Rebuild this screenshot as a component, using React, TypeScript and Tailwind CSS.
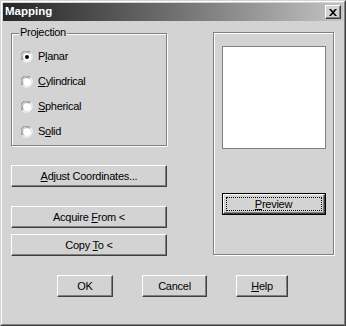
import React from "react";

const FONT = { fontFamily: '"Liberation Sans", Arial, sans-serif' };

function Btn({
  w,
  children,
  className = "",
}: {
  w: string;
  children: React.ReactNode;
  className?: string;
}) {
  return (
    <div
      className={`${w} h-[22px] flex items-center justify-center border border-t-white border-l-white border-r-[#404040] border-b-[#404040] shadow-[inset_-1px_-1px_0_#808080] text-[11px] tracking-[-0.25px] text-black bg-[#d3d3d3] ${className}`}
    >
      {children}
    </div>
  );
}

function Radio({ checked }: { checked?: boolean }) {
  return (
    <svg width="12" height="12" viewBox="0 0 12 12" className="shrink-0">
      <circle cx="6" cy="6" r="5.5" fill="#d3d3d3" />
      <path d="M1.5 9.5 A5.5 5.5 0 0 1 9.5 1.5" stroke="#808080" strokeWidth="1" fill="none" />
      <path d="M9.5 1.5 A5.5 5.5 0 0 1 1.5 9.5" stroke="#ffffff" strokeWidth="1" fill="none" />
      <path d="M2.5 8.5 A4.5 4.5 0 0 1 8.5 2.5" stroke="#404040" strokeWidth="1" fill="none" />
      <path d="M8.5 2.5 A4.5 4.5 0 0 1 2.5 8.5" stroke="#d3d3d3" strokeWidth="1" fill="none" />
      <circle cx="6" cy="6" r="4" fill="#ffffff" />
      {checked && <circle cx="6" cy="6" r="2" fill="#000000" />}
    </svg>
  );
}

function RadioRow({
  checked,
  pre,
  u,
  post,
}: {
  checked?: boolean;
  pre: string;
  u: string;
  post: string;
}) {
  return (
    <div className="flex items-center h-[13px] gap-[5px]">
      <Radio checked={checked} />
      <span className="text-[11px] tracking-[-0.3px] text-black leading-none">
        {pre}
        <span className="underline underline-offset-[1px]">{u}</span>
        {post}
      </span>
    </div>
  );
}

export default function App() {
  return (
    <div style={FONT} className="w-[346px] h-[326px] bg-[#d3d3d3] select-none">
      <div className="w-full h-full border border-t-[#d3d3d3] border-l-[#d3d3d3] border-r-[#404040] border-b-[#404040]">
        <div className="w-full h-full border border-t-white border-l-white border-r-[#808080] border-b-[#808080] p-px flex flex-col">
          {/* Title bar */}
          <div className="h-[18px] flex items-center justify-between bg-gradient-to-r from-[#262626] to-[#c4c4c4] pl-[2px] pr-[2px]">
            <span className="text-white font-bold text-[11.5px] leading-none">Mapping</span>
            <div className="w-[16px] h-[14px] flex items-center justify-center border border-t-white border-l-white border-r-[#404040] border-b-[#404040] shadow-[inset_-1px_-1px_0_#808080] bg-[#d3d3d3]">
              <svg width="8" height="7" viewBox="0 0 8 7">
                <path d="M0 0h2l2 2.2L6 0h2L5 3.5 8 7H6L4 4.8 2 7H0l3-3.5z" fill="#000" />
              </svg>
            </div>
          </div>

          {/* Body */}
          <div className="flex pl-[8px] mt-[11px]">
            {/* Left column */}
            <div className="w-[156px] flex flex-col">
              <div className="relative h-[113px] mt-px border border-[#808080] shadow-[1px_1px_0_#ffffff,inset_1px_1px_0_#ffffff]">
                <span className="absolute left-[7px] top-[-7px] px-[1px] bg-[#d3d3d3] text-[11px] tracking-[-0.3px] leading-none text-black">
                  Projection
                </span>
                <div className="flex flex-col gap-[12px] pl-[9px] pt-[16px]">
                  <RadioRow checked pre="P" u="l" post="anar" />
                  <RadioRow pre="" u="C" post="ylindrical" />
                  <RadioRow pre="" u="S" post="pherical" />
                  <RadioRow pre="S" u="o" post="lid" />
                </div>
              </div>
              <Btn w="w-[156px]" className="mt-[19px]">
                <span>
                  <span className="underline">A</span>djust Coordinates...
                </span>
              </Btn>
              <Btn w="w-[156px]" className="mt-[19px]">
                <span>
                  Acquire <span className="underline">F</span>rom &lt;
                </span>
              </Btn>
              <Btn w="w-[156px]" className="mt-[6px]">
                <span>
                  Copy <span className="underline">T</span>o &lt;
                </span>
              </Btn>
            </div>

            {/* Right group */}
            <div className="ml-[46px] w-[121px] h-[223px] border border-[#808080] shadow-[1px_1px_0_#ffffff,inset_1px_1px_0_#ffffff] flex flex-col items-center">
              <div className="mt-[13px] w-[104px] h-[103px] bg-white border border-[#808080]" />
              <div className="mt-[44px] w-[104px] h-[22px] border border-black">
                <div className="w-full h-full flex items-center justify-center border border-t-white border-l-white border-r-[#404040] border-b-[#404040] shadow-[inset_-1px_-1px_0_#808080] p-[2px]">
                  <div className="w-full h-full border border-dotted border-black flex items-center justify-center text-[11px] tracking-[-0.25px] leading-none text-black">
                    <span>
                      <span className="underline">P</span>review
                    </span>
                  </div>
                </div>
              </div>
            </div>
          </div>

          {/* Bottom buttons */}
          <div className="flex pl-[54px] mt-[19px]">
            <Btn w="w-[56px]">OK</Btn>
            <Btn w="w-[65px]" className="ml-[29px]">Cancel</Btn>
            <Btn w="w-[52px]" className="ml-[29px]">
              <span>
                <span className="underline">H</span>elp
              </span>
            </Btn>
          </div>
        </div>
      </div>
    </div>
  );
}
